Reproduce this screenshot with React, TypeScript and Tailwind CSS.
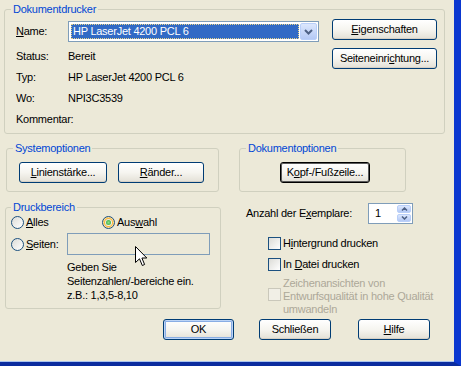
import type { ReactNode } from 'react';

function U({ children }: { children: ReactNode }) {
  return <span className="underline decoration-1 underline-offset-[1px]">{children}</span>;
}

function XpButton({
  children,
  className = '',
  variant = 'default',
}: {
  children: ReactNode;
  className?: string;
  variant?: 'default' | 'primary' | 'focus';
}) {
  const ring =
    variant === 'primary'
      ? 'shadow-[inset_0_0_0_1px_#BCD4F6,inset_0_0_0_2px_#89ADE4]'
      : variant === 'focus'
        ? 'border-black shadow-[inset_0_0_0_1px_#5A5A5A]'
        : 'shadow-[inset_0_-1px_0_#D6D0C5]';
  return (
    <button
      type="button"
      className={`flex h-[21px] items-center justify-center rounded-[3px] border border-[#003C74] bg-linear-to-b from-white via-[#F6F5F0] to-[#E3E0D6] text-black ${ring} ${className}`}
    >
      {children}
    </button>
  );
}

function GroupBox({
  title,
  titleOffset,
  className,
  children,
}: {
  title: string;
  titleOffset: string;
  className: string;
  children: ReactNode;
}) {
  return (
    <fieldset className={`shrink-0 rounded-[3px] border border-[#D0D0BF] ${className}`}>
      <legend className={`${titleOffset} px-[2px] text-[#0046D5]`}>{title}</legend>
      {children}
    </fieldset>
  );
}

function Radio({ checked = false, hot = false }: { checked?: boolean; hot?: boolean }) {
  return (
    <span
      className={`flex h-[13px] w-[13px] shrink-0 items-center justify-center rounded-full border border-[#1C5180] bg-linear-to-br from-[#DCDCD7] to-white ${
        hot ? 'shadow-[inset_0_0_0_1px_#FEDF9C,inset_0_0_0_2px_#F8B636]' : ''
      }`}
    >
      {checked && (
        <span className="h-[5px] w-[5px] rounded-full bg-radial from-[#8BE08B] to-[#21A121]" />
      )}
    </span>
  );
}

function Checkbox({ disabled = false }: { disabled?: boolean }) {
  return (
    <span
      className={`block h-[13px] w-[13px] shrink-0 border ${
        disabled
          ? 'border-[#CAC8BB] bg-[#F1EFE6]'
          : 'border-[#1C5180] bg-linear-to-br from-[#DCDCD7] to-white'
      }`}
    />
  );
}

function Combo() {
  return (
    <div className="flex h-[21px] w-[251px] border border-[#7F9DB9] bg-white p-[1px]">
      <div className="m-[1px] flex flex-1 items-center bg-[#316AC5] pl-[2px] text-white outline-1 -outline-offset-1 outline-dotted outline-[#E6D48A]">
        HP LaserJet 4200 PCL 6
      </div>
      <div className="flex w-[17px] items-center justify-center rounded-[2px] border border-[#B9CFF9] bg-linear-to-b from-[#DCE7FD] to-[#B4C9F5]">
        <svg width="9" height="6" viewBox="0 0 9 6">
          <path d="M1 1 L4.5 4.5 L8 1" fill="none" stroke="#4D6185" strokeWidth="2" />
        </svg>
      </div>
    </div>
  );
}

function Spinner() {
  return (
    <div className="flex h-[21px] w-[45px] border border-[#7F9DB9] bg-white p-[1px]">
      <div className="flex flex-1 items-center pl-[5px]">1</div>
      <div className="flex w-[14px] flex-col gap-[1px]">
        <div className="flex flex-1 items-center justify-center rounded-[2px] border border-[#B9CFF9] bg-linear-to-b from-[#DCE7FD] to-[#B4C9F5]">
          <svg width="7" height="4" viewBox="0 0 7 4">
            <path d="M1 3.5 L3.5 1 L6 3.5" fill="none" stroke="#4D6185" strokeWidth="1.5" />
          </svg>
        </div>
        <div className="flex flex-1 items-center justify-center rounded-[2px] border border-[#B9CFF9] bg-linear-to-b from-[#DCE7FD] to-[#B4C9F5]">
          <svg width="7" height="4" viewBox="0 0 7 4">
            <path d="M1 0.5 L3.5 3 L6 0.5" fill="none" stroke="#4D6185" strokeWidth="1.5" />
          </svg>
        </div>
      </div>
    </div>
  );
}

function Cursor() {
  return (
    <svg className="absolute left-[135px] top-[246px]" width="13" height="21" viewBox="0 0 13 21">
      <path
        d="M0.5 0.5 V16.5 L4.5 12.8 L7.3 19.5 L9.6 18.5 L6.9 12 H11.8 Z"
        fill="white"
        stroke="black"
        strokeWidth="1"
        strokeLinejoin="miter"
      />
    </svg>
  );
}

export default function App() {
  const info = [
    ['Status:', 'Bereit'],
    ['Typ:', 'HP LaserJet 4200 PCL 6'],
    ['Wo:', 'NPI3C3539'],
    ['Kommentar:', ''],
  ];

  return (
    <div className="h-[366px] w-[461px] border-r-[7px] border-b-[4px] border-r-[#0A37D0] border-b-[#0B2C9E] bg-[#ECE9D8] font-['Liberation_Sans',Arial,sans-serif] text-[11px] leading-[13px] tracking-[-0.25px] text-black">
      <div className="relative flex h-[362px] flex-col border-b border-[#A9C3EE]">
        {/* Dokumentdrucker */}
        <GroupBox title="Dokumentdrucker" titleOffset="ml-[6px]" className="ml-[4px] mt-[3px] h-[131px] w-[441px]">
          <div className="flex pl-[11px] pr-[7px]">
            <div className="flex w-[303px] flex-col">
              <div className="mt-[5px] flex h-[21px] items-center">
                <span className="w-[52px]">
                  <U>N</U>ame:
                </span>
                <Combo />
              </div>
              <div className="mt-[8px] flex flex-col gap-[8px]">
                {info.map(([label, value]) => (
                  <div key={label} className="flex h-[13px]">
                    <span className="w-[52px]">{label}</span>
                    <span>{value}</span>
                  </div>
                ))}
              </div>
            </div>
            <div className="ml-auto mt-[3px] flex flex-col gap-[8px]">
              <XpButton className="w-[105px]">
                <U>E</U>igenschaften
              </XpButton>
              <XpButton className="w-[105px]">
                Seiteneinri<U>c</U>htung...
              </XpButton>
            </div>
          </div>
        </GroupBox>

        {/* Options row */}
        <div className="mt-[8px] flex">
          <GroupBox title="Systemoptionen" titleOffset="ml-[6px]" className="ml-[6px] h-[50px] w-[213px]">
            <div className="mt-[7px] flex gap-[11px] pl-[12px]">
              <XpButton className="w-[88px]">
                <U>L</U>inienstärke...
              </XpButton>
              <XpButton className="w-[86px]">
                <U>R</U>änder...
              </XpButton>
            </div>
          </GroupBox>
          <GroupBox title="Dokumentoptionen" titleOffset="ml-[6px]" className="ml-[20px] h-[50px] w-[167px]">
            <div className="mt-[7px] flex pl-[40px]">
              <XpButton variant="focus" className="w-[90px]">
                K<U>o</U>pf-/Fußzeile...
              </XpButton>
            </div>
          </GroupBox>
        </div>

        {/* Druckbereich + copies */}
        <div className="mt-[9px] flex items-start">
          <GroupBox title="Druckbereich" titleOffset="ml-[5px]" className="ml-[5px] h-[108px] w-[216px]">
            <div className="flex flex-col pl-[5px]">
              <div className="mt-[2px] flex h-[13px] items-center">
                <div className="flex w-[91px] items-center gap-[2px]">
                  <Radio />
                  <span>
                    <U>A</U>lles
                  </span>
                </div>
                <div className="flex items-center gap-[2px]">
                  <Radio checked hot />
                  <span>
                    Aus<U>w</U>ahl
                  </span>
                </div>
              </div>
              <div className="mt-[4px] flex h-[22px] items-center">
                <div className="flex w-[56px] items-center gap-[2px]">
                  <Radio />
                  <span>
                    <U>S</U>eiten:
                  </span>
                </div>
                <div className="h-[22px] w-[143px] border border-[#7F9DB9] bg-[#ECE9D8]" />
              </div>
              <div className="mt-[5px] pl-[56px] leading-[14px]">
                Geben Sie
                <br />
                Seitenzahlen/-bereiche ein.
                <br />
                z.B.: 1,3,5-8,10
              </div>
            </div>
          </GroupBox>

          <div className="ml-[25px] flex flex-col">
            <div className="mt-[2px] flex h-[21px] items-center">
              <span className="w-[122px]">
                Anzahl der E<U>x</U>emplare:
              </span>
              <Spinner />
            </div>
            <div className="ml-[22px] mt-[13px] flex h-[13px] items-center gap-[2px]">
              <Checkbox />
              <span>
                H<U>i</U>ntergrund drucken
              </span>
            </div>
            <div className="ml-[22px] mt-[8px] flex h-[13px] items-center gap-[2px]">
              <Checkbox />
              <span>
                In <U>D</U>atei drucken
              </span>
            </div>
            <div className="ml-[22px] mt-[6px] flex items-start gap-[2px]">
              <div className="mt-[11px]">
                <Checkbox disabled />
              </div>
              <span className="text-[#ACA899]">
                Zeichenansichten von
                <br />
                Entwurfsqualität in hohe Qualität
                <br />
                umwandeln
              </span>
            </div>
          </div>
        </div>

        {/* Dialog buttons */}
        <div className="mt-[3px] flex">
          <XpButton variant="primary" className="ml-[163px] w-[71px]">
            OK
          </XpButton>
          <XpButton className="ml-[25px] w-[72px]">Schließen</XpButton>
          <XpButton className="ml-[27px] w-[72px]">
            <U>H</U>ilfe
          </XpButton>
        </div>

        <Cursor />
      </div>
    </div>
  );
}
